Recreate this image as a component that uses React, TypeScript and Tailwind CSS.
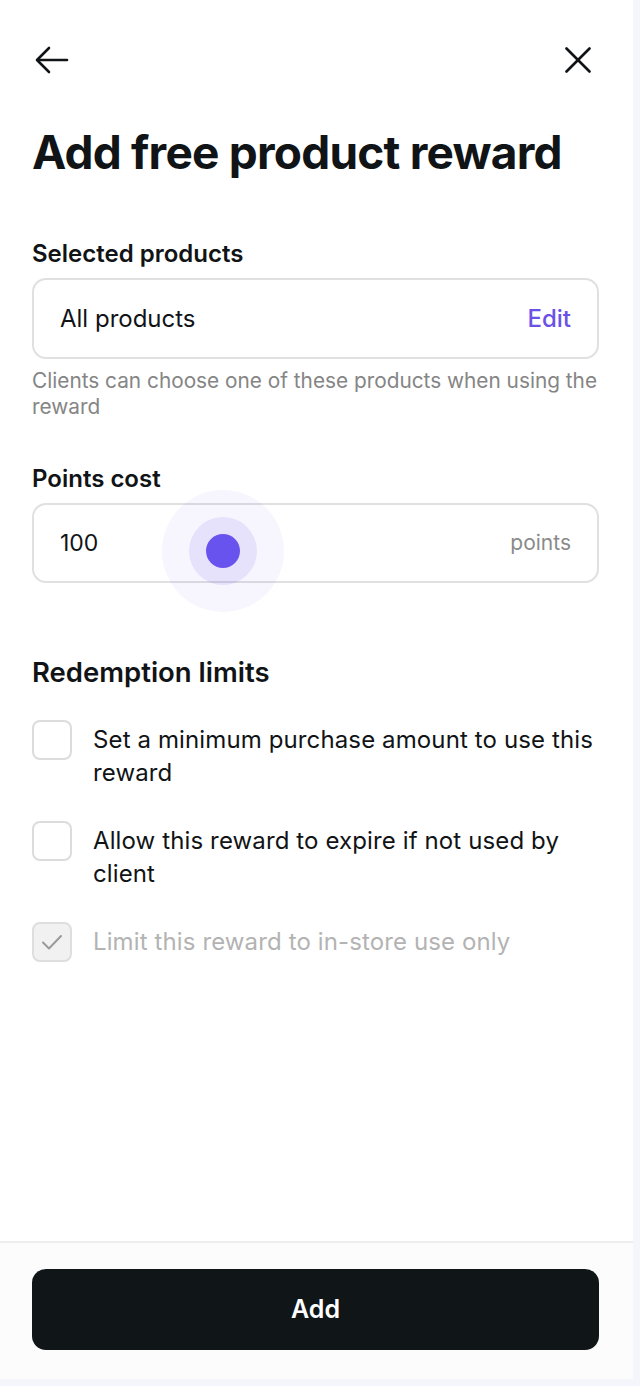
import React from 'react';

const FONT = { fontFamily: 'Inter, "Noto Sans", sans-serif' };

function BackIcon() {
  return (
    <svg width="34" height="28" viewBox="0 0 34 28" fill="none" stroke="#111416" strokeWidth="2.6" strokeLinecap="round" strokeLinejoin="round">
      <path d="M32 14H3" />
      <path d="M14 2L2 14l12 12" />
    </svg>
  );
}

function CloseIcon() {
  return (
    <svg width="26" height="26" viewBox="0 0 26 26" fill="none" stroke="#111416" strokeWidth="2.6" strokeLinecap="round">
      <path d="M1.5 1.5l23 23" />
      <path d="M24.5 1.5l-23 23" />
    </svg>
  );
}

function CheckRow({ label, checked, disabled }: { label: string; checked?: boolean; disabled?: boolean }) {
  return (
    <label className="flex items-start gap-[21px]">
      <span
        className={
          disabled
            ? 'flex h-10 w-10 shrink-0 items-center justify-center rounded-lg border-2 border-[#dedede] bg-[#f1f1f1]'
            : 'flex h-10 w-10 shrink-0 items-center justify-center rounded-lg border-2 border-[#dcdcdc] bg-white'
        }
      >
        {checked && (
          <svg width="22" height="18" viewBox="0 0 22 18" fill="none" stroke="#9a9a9a" strokeWidth="2" strokeLinecap="round" strokeLinejoin="round">
            <path d="M2 9.5l6 6L20 3" />
          </svg>
        )}
      </span>
      <span
        className={
          disabled
            ? 'pt-[3px] text-[24px] leading-[33px] tracking-[0.005em] text-[#b3b3b3]'
            : 'pt-[3px] text-[24px] leading-[33px] tracking-[0.005em] text-[#111416]'
        }
      >
        {label}
      </span>
    </label>
  );
}

export default function App() {
  return (
    <div className="h-[1386px] w-[640px] bg-[#f4f6fb]" style={FONT}>
      <div className="flex h-[1379px] w-[633px] flex-col bg-white">
        <div className="flex-1 pl-8 pr-[34px]">
          <div className="mt-[47px] flex h-[26px] items-center justify-between pl-[3px]">
            <button type="button">
              <BackIcon />
            </button>
            <button type="button" className="mr-[8px]">
              <CloseIcon />
            </button>
          </div>

          <h1 className="mt-[52px] text-[46px] font-bold leading-[54px] tracking-[-0.017em] text-[#111416]">
            Add free product reward
          </h1>

          <div className="mt-[61px] text-[24px] font-semibold leading-[28px] text-[#111416]">
            Selected products
          </div>
          <div className="mt-[10px] flex h-[81px] items-center justify-between rounded-[14px] border-2 border-[#e0e0e0] px-[26px]">
            <span className="text-[24px] text-[#111416]">All products</span>
            <button type="button" className="text-[24px] font-medium text-[#6a52e6]">
              Edit
            </button>
          </div>
          <p className="mt-[9px] text-[20.8px] leading-[26px] text-[#858585]">
            Clients can choose one of these products when using the reward
          </p>

          <div className="mt-[45px] text-[24px] font-semibold leading-[28px] text-[#111416]">
            Points cost
          </div>
          <div className="relative mt-[10px] flex h-[80px] items-center justify-between rounded-[14px] border-2 border-[#e0e0e0] px-[26px]">
            <span className="text-[23px] text-[#111416]">100</span>
            <span className="text-[21px] text-[#8a8a8a]">points</span>
            <span className="pointer-events-none absolute left-[128px] top-[-15px] flex h-[122px] w-[122px] items-center justify-center rounded-full bg-[#6a52f0]/[0.05]">
              <span className="flex h-[68px] w-[68px] items-center justify-center rounded-full bg-[#6a52f0]/[0.12]">
                <span className="h-[34px] w-[34px] rounded-full bg-[#6953ee]" />
              </span>
            </span>
          </div>

          <div className="mt-[73px] text-[27.5px] font-semibold leading-[32px] text-[#111416]">
            Redemption limits
          </div>
          <div className="mt-[32px] flex flex-col gap-[32px]">
            <CheckRow label="Set a minimum purchase amount to use this reward" />
            <CheckRow label="Allow this reward to expire if not used by client" />
            <CheckRow label="Limit this reward to in-store use only" checked disabled />
          </div>
        </div>

        <div className="border-t-2 border-[#eeeeee] bg-[#fcfcfd] pb-[29px] pl-8 pr-[34px] pt-[26px]">
          <button
            type="button"
            className="flex h-[81px] w-full items-center justify-center rounded-[14px] bg-[#101618] text-[25px] font-semibold text-white"
          >
            Add
          </button>
        </div>
      </div>
    </div>
  );
}
